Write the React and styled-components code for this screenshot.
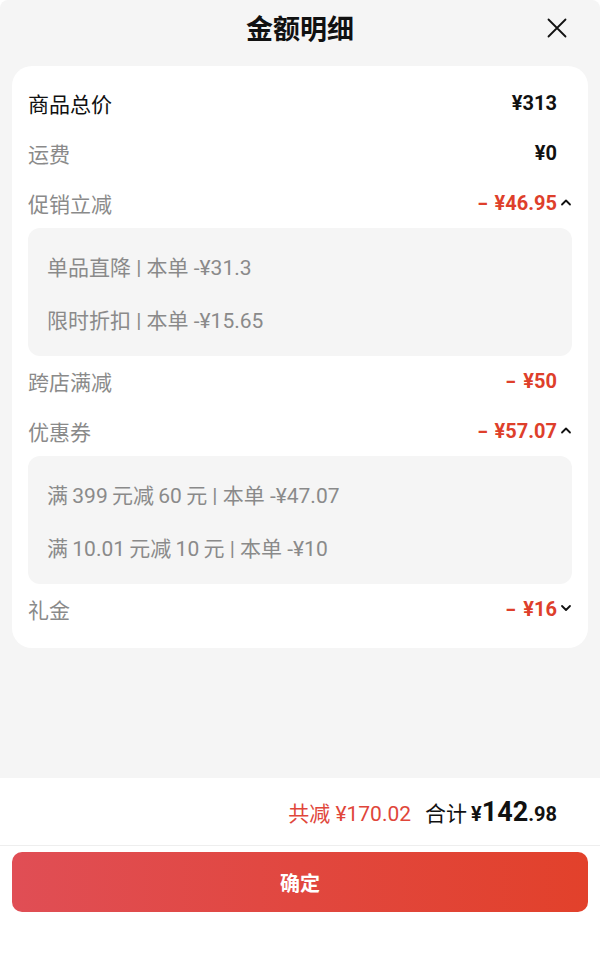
import React from "react";
import styled, { createGlobalStyle } from "styled-components";

const GlobalStyle = createGlobalStyle`
  body {
    margin: 0;
    padding: 0;
    font-family: "Roboto", "Noto Sans CJK SC", sans-serif;
    background: #ffffff;
  }
  * { box-sizing: border-box; }
`;

const rows = [
	{ label: "商品总价", amount: "¥313", strong: true },
	{ label: "运费", amount: "¥0" },
	{
		label: "促销立减",
		amount: "¥46.95",
		minus: true,
		toggle: "up",
		details: ["单品直降 | 本单 -¥31.3", "限时折扣 | 本单 -¥15.65"],
	},
	{ label: "跨店满减", amount: "¥50", minus: true },
	{
		label: "优惠券",
		amount: "¥57.07",
		minus: true,
		toggle: "up",
		details: [
			"满\u2009399\u2009元减\u200960\u2009元 | 本单 -¥47.07",
			"满\u200910.01\u2009元减\u200910\u2009元 | 本单 -¥10",
		],
	},
	{ label: "礼金", amount: "¥16", minus: true, toggle: "down" },
];

function Chevron({ dir }) {
	return (
		<svg width="12" height="8" viewBox="0 0 12 8">
			<path
				d={dir === "up" ? "M2 6.5 L6 2.5 L10 6.5" : "M2 2 L6 6 L10 2"}
				fill="none"
				stroke="#111"
				strokeWidth="1.8"
				strokeLinecap="round"
				strokeLinejoin="round"
			/>
		</svg>
	);
}

function App() {
	return (
		<>
			<GlobalStyle />
			<Page>
				<Sheet>
					<Header>
						<span />
						<Title>金额明细</Title>
						<CloseButton>
							<svg width="20" height="20" viewBox="0 0 20 20">
								<path
									d="M1.5 1.5 L18.5 18.5 M18.5 1.5 L1.5 18.5"
									stroke="#111"
									strokeWidth="1.8"
									strokeLinecap="round"
								/>
							</svg>
						</CloseButton>
					</Header>
					<Card>
						{rows.map((row) => (
							<React.Fragment key={row.label}>
								<Row>
									<Label $strong={row.strong}>{row.label}</Label>
									<ValueWrap>
										<Value $red={row.minus}>
											{row.minus && <Minus>-</Minus>}
											{row.amount}
										</Value>
										<IconSlot>{row.toggle && <Chevron dir={row.toggle} />}</IconSlot>
									</ValueWrap>
								</Row>
								{row.details && (
									<DetailBox>
										{row.details.map((d) => (
											<DetailLine key={d}>{d}</DetailLine>
										))}
									</DetailBox>
								)}
							</React.Fragment>
						))}
					</Card>
				</Sheet>
				<Summary>
					<Saved>共减 ¥170.02</Saved>
					<Total>
						<TotalLabel>合计</TotalLabel>
						<Yen>¥</Yen>
						<BigNum>142</BigNum>
						<SmallNum>.98</SmallNum>
					</Total>
				</Summary>
				<ButtonBar>
					<ConfirmButton>确定</ConfirmButton>
				</ButtonBar>
			</Page>
		</>
	);
}

export default App;

const Page = styled.div`
	width: 600px;
	height: 965px;
	display: flex;
	flex-direction: column;
	background: #fff;
`;

const Sheet = styled.div`
	flex: 0 0 778px;
	background: #f5f5f5;
	border-radius: 8px 8px 0 0;
	display: flex;
	flex-direction: column;
`;

const Header = styled.div`
	height: 56px;
	display: grid;
	grid-template-columns: 1fr auto 1fr;
	align-items: center;
`;

const Title = styled.div`
	font-family: "Noto Sans CJK SC", sans-serif;
	font-size: 27px;
	font-weight: 700;
	color: #111;
	line-height: 1;
	padding-bottom: 2px;
`;

const CloseButton = styled.div`
	justify-self: end;
	padding-right: 33px;
	display: flex;
	align-items: center;
`;

const Card = styled.div`
	margin: 10px 12px 0;
	padding: 12px 16px 14px 16px;
	background: #fff;
	border-radius: 20px;
`;

const Row = styled.div`
	height: 50px;
	display: flex;
	align-items: center;
	justify-content: space-between;
`;

const Label = styled.div`
	font-family: "Noto Sans CJK SC", sans-serif;
	font-size: 21px;
	color: ${(p) => (p.$strong ? "#111" : "#8a8a8a")};
`;

const ValueWrap = styled.div`
	display: flex;
	align-items: center;
`;

const Value = styled.div`
	display: flex;
	align-items: center;
	font-family: "Roboto", "Noto Sans CJK SC", sans-serif;
	font-size: 20px;
	font-weight: 700;
	color: ${(p) => (p.$red ? "#de3f2b" : "#111")};
`;

const Minus = styled.span`
	margin-right: 8px;
	transform: scaleX(1.5);
`;

const IconSlot = styled.div`
	width: 15px;
	display: flex;
	justify-content: flex-end;
	align-items: center;
	padding-bottom: 2px;
`;

const DetailBox = styled.div`
	background: #f5f5f5;
	border-radius: 12px;
	padding: 11px 19px 11px;
`;

const DetailLine = styled.div`
	height: 53px;
	display: flex;
	align-items: center;
	font-family: "Roboto", "Noto Sans CJK SC", sans-serif;
	font-size: 21px;
	color: #8a8a8a;
`;

const Summary = styled.div`
	height: 68px;
	display: flex;
	align-items: center;
	justify-content: flex-end;
	gap: 14px;
	padding-right: 43px;
	border-bottom: 1px solid #eeeeee;
`;

const Saved = styled.div`
	font-family: "Roboto", "Noto Sans CJK SC", sans-serif;
	font-size: 21px;
	color: #e0463a;
`;

const Total = styled.div`
	display: flex;
	align-items: baseline;
	color: #111;
	font-family: "Roboto", "Noto Sans CJK SC", sans-serif;
`;

const TotalLabel = styled.span`
	font-size: 21px;
	margin-right: 4px;
`;

const Yen = styled.span`
	font-size: 20px;
	font-weight: 700;
`;

const BigNum = styled.span`
	font-size: 27px;
	font-weight: 700;
`;

const SmallNum = styled.span`
	font-size: 20px;
	font-weight: 700;
`;

const ButtonBar = styled.div`
	padding: 6px 12px;
`;

const ConfirmButton = styled.div`
	height: 60px;
	border-radius: 10px;
	background: linear-gradient(90deg, #e04e55 0%, #e1473f 50%, #e2412b 100%);
	color: #fff;
	display: flex;
	align-items: center;
	justify-content: center;
	font-family: "Noto Sans CJK SC", sans-serif;
	font-size: 20px;
	font-weight: 700;
`;
